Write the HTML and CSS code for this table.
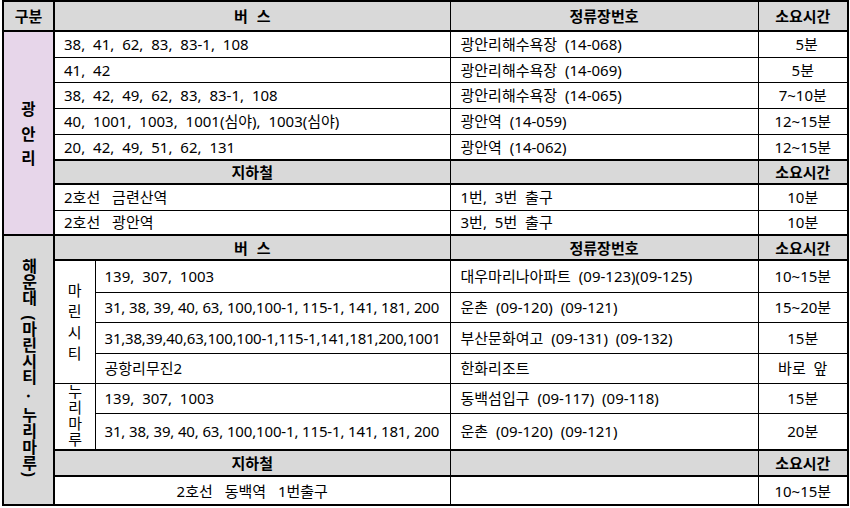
FILE: index.html
```html
<!DOCTYPE html>
<html lang="ko">
<head>
<meta charset="utf-8">
<title>교통편 안내</title>
<link rel="stylesheet" href="styles.css">
</head>
<body>
<table class="guide">
  <colgroup>
    <col class="c-area">
    <col class="c-sub">
    <col class="c-bus">
    <col class="c-stop">
    <col class="c-time">
  </colgroup>
  <tr class="head r30">
    <th class="area-head">구분</th>
    <th colspan="2" class="spaced">버 스</th>
    <th>정류장번호</th>
    <th>소요시간</th>
  </tr>
  <tr class="r26">
    <th rowspan="8" class="area gwangalli">광<br>안<br>리</th>
    <td colspan="2" class="bus">38, 41, 62, 83, 83-1, 108</td>
    <td class="stop">광안리해수욕장 (14-068)</td>
    <td class="time">&nbsp;5분</td>
  </tr>
  <tr class="r25">
    <td colspan="2" class="bus">41, 42</td>
    <td class="stop">광안리해수욕장 (14-069)</td>
    <td class="time">5분</td>
  </tr>
  <tr class="r26">
    <td colspan="2" class="bus">38, 42, 49, 62, 83, 83-1, 108</td>
    <td class="stop">광안리해수욕장 (14-065)</td>
    <td class="time">7~10분</td>
  </tr>
  <tr class="r26">
    <td colspan="2" class="bus">40, 1001, 1003, 1001(심야), 1003(심야)</td>
    <td class="stop">광안역 (14-059)</td>
    <td class="time">12~15분</td>
  </tr>
  <tr class="r26">
    <td colspan="2" class="bus">20, 42, 49, 51, 62, 131</td>
    <td class="stop">광안역 (14-062)</td>
    <td class="time">12~15분</td>
  </tr>
  <tr class="head sub-head r24">
    <th colspan="2">지하철</th>
    <th></th>
    <th>소요시간</th>
  </tr>
  <tr class="r26">
    <td colspan="2" class="bus wide">2호선 금련산역</td>
    <td class="stop">1번, 3번 출구</td>
    <td class="time">10분</td>
  </tr>
  <tr class="r25 section-end">
    <td colspan="2" class="bus wide">2호선 광안역</td>
    <td class="stop">3번, 5번 출구</td>
    <td class="time">10분</td>
  </tr>
  <tr class="head r25">
    <th rowspan="9" class="area haeundae"><div class="vtext">해운대 (마린시티 · 누리마루)</div></th>
    <th colspan="2" class="spaced">버 스</th>
    <th>정류장번호</th>
    <th>소요시간</th>
  </tr>
  <tr class="r32">
    <td rowspan="4" class="place marine">마<br>린<br>시<br>티</td>
    <td class="bus">139, 307, 1003</td>
    <td class="stop">대우마리나아파트 (09-123)(09-125)</td>
    <td class="time">10~15분</td>
  </tr>
  <tr class="r30">
    <td class="bus tight">31, 38, 39, 40, 63, 100,100-1, 115-1, 141, 181, 200</td>
    <td class="stop">운촌 (09-120) (09-121)</td>
    <td class="time">15~20분</td>
  </tr>
  <tr class="r31">
    <td class="bus tighter">31,38,39,40,63,100,100-1,115-1,141,181,200,1001</td>
    <td class="stop">부산문화여고 (09-131) (09-132)</td>
    <td class="time">15분</td>
  </tr>
  <tr class="r30">
    <td class="bus">공항리무진2</td>
    <td class="stop">한화리조트</td>
    <td class="time">바로 앞</td>
  </tr>
  <tr class="r30">
    <td rowspan="2" class="place nurimaru"><div class="vsmall">누리마루</div></td>
    <td class="bus">139, 307, 1003</td>
    <td class="stop">동백섬입구 (09-117) (09-118)</td>
    <td class="time">15분</td>
  </tr>
  <tr class="r37">
    <td class="bus tight">31, 38, 39, 40, 63, 100,100-1, 115-1, 141, 181, 200</td>
    <td class="stop">운촌 (09-120) (09-121)</td>
    <td class="time">20분</td>
  </tr>
  <tr class="head sub-head r26">
    <th colspan="2">지하철</th>
    <th></th>
    <th>소요시간</th>
  </tr>
  <tr class="r29">
    <td colspan="2" class="bus center wide">2호선 동백역 1번출구</td>
    <td class="stop"></td>
    <td class="time">10~15분</td>
  </tr>
</table>
</body>
</html>
```

FILE: styles.css
```css
html, body {
  margin: 0;
  padding: 0;
  background: #ffffff;
}

body {
  font-family: "Noto Sans", "Noto Sans CJK KR", sans-serif;
  color: #000000;
}

.guide {
  border-collapse: collapse;
  table-layout: fixed;
  width: 847px;
  margin: 0 0 0 2px;
  font-size: 15px;
  border: 2px solid #000;
}

.c-area { width: 51px; }
.c-sub { width: 41px; }
.c-bus { width: 355px; }
.c-stop { width: 308px; }
.c-time { width: 90px; }

.guide td,
.guide th {
  border: 1px solid #000;
  padding: 0;
  white-space: nowrap;
  overflow: hidden;
  vertical-align: middle;
  line-height: 18px;
  word-spacing: 4px;
}

.guide th {
  font-weight: bold;
  text-align: center;
  word-spacing: 0;
}

.guide th.spaced {
  word-spacing: 5px;
}

.head th {
  background: #d9d9d9;
  border-bottom: 2px solid #000;
}

.sub-head th {
  border-top: 2px solid #000;
}

.section-end td {
  border-bottom: 2px solid #000;
}

.area {
  background: #e7d6ea;
  border-right: 2px solid #000 !important;
  border-bottom: 2px solid #000 !important;
  font-size: 15.5px;
}

.area-head {
  border-right: 2px solid #000 !important;
}

.gwangalli {
  line-height: 24.5px !important;
  padding-top: 2px !important;
}

.haeundae {
  padding-bottom: 6px !important;
}

.vtext {
  writing-mode: vertical-rl;
  text-orientation: mixed;
  margin: 0 auto;
  line-height: 20px;
  font-size: 16px;
  letter-spacing: 0;
  word-spacing: 5px;
}

.bus {
  padding-left: 9px !important;
  text-align: left;
}

.bus.center {
  text-align: center;
  padding-left: 0 !important;
}

.guide td.wide {
  word-spacing: 8px;
}

.guide td.tight {
  letter-spacing: -0.15px;
  word-spacing: 0;
}

.guide td.tighter {
  letter-spacing: -0.2px;
  word-spacing: 0;
}

.stop {
  padding-left: 10px !important;
  text-align: left;
}

.time {
  text-align: center;
}

.place {
  text-align: center;
}

.marine {
  line-height: 21px !important;
}

.vsmall {
  writing-mode: vertical-rl;
  text-orientation: upright;
  margin: 0 auto;
  letter-spacing: 1px;
  line-height: 18px;
}

.r24 { height: 24px; }
.r25 { height: 25px; }
.r26 { height: 26px; }
.r29 { height: 29px; }
.r30 { height: 30px; }
.r31 { height: 31px; }
.r32 { height: 32px; }
.r37 { height: 37px; }
```
